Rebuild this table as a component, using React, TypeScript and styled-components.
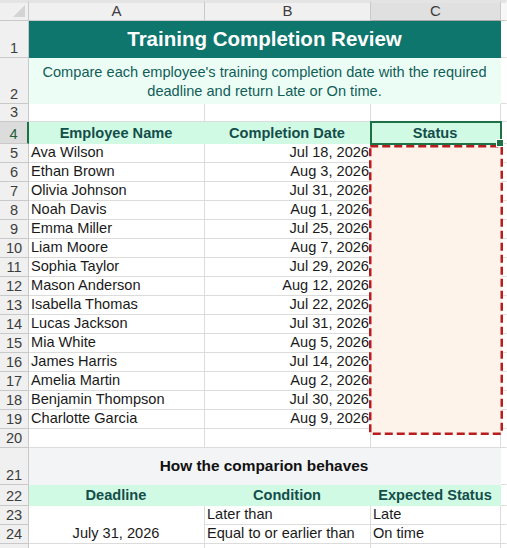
import React from "react";
import styled, { createGlobalStyle, css } from "styled-components";

const Global = createGlobalStyle`
  html, body { margin: 0; padding: 0; background: #ffffff; }
  body { font-family: "Liberation Sans", Arial, sans-serif; }
  #root { width: 507px; height: 548px; overflow: hidden; }
`;

const GRID = "#dcdcdc";
const HDR_LINE = "#c9c9c9";
const SEL_GREEN = "#1e7145";
const TEAL = "#0f766e";
const MINT = "#d1fae5";
const MINT_LIGHT = "#ecfdf5";
const HEAD_TEXT = "#134e4a";

const Sheet = styled.div`
  display: grid;
  grid-template-columns: 29px 176px 166px 130px 6px;
  grid-template-rows: 21px 37px 46px 18px 22px repeat(15, 19px) 19px 37px 21px 19px 19px 19px;
  width: 507px;
  font-size: 14.6px;
  color: #1a1a1a;
`;

type CellProps = {
  $span?: number;
  $rows?: number;
  $align?: "left" | "center" | "right";
  $valign?: "top" | "center" | "bottom";
  $bg?: string;
  $bold?: boolean;
  $color?: string;
  $noRight?: boolean;
  $noBottom?: boolean;
};

const Cell = styled.div<CellProps>`
  box-sizing: border-box;
  display: flex;
  min-width: 0;
  white-space: nowrap;
  overflow: visible;
  border-right: 1px solid ${GRID};
  border-bottom: 1px solid ${GRID};
  padding: 0 3px 2px 2px;
  background: ${(p) => p.$bg || "transparent"};
  color: ${(p) => p.$color || "#1a1a1a"};
  font-weight: ${(p) => (p.$bold ? 700 : 400)};
  justify-content: ${(p) =>
    p.$align === "center" ? "center" : p.$align === "right" ? "flex-end" : "flex-start"};
  align-items: ${(p) =>
    p.$valign === "top" ? "flex-start" : p.$valign === "center" ? "center" : "flex-end"};
  ${(p) => p.$span && css`grid-column: span ${p.$span};`}
  ${(p) => p.$rows && css`grid-row: span ${p.$rows};`}
  ${(p) => p.$noRight && css`border-right-color: transparent;`}
  ${(p) => p.$noBottom && css`border-bottom-color: transparent;`}
`;

const DateCell = styled(Cell)`
  padding-right: 1px;
  position: relative;
  z-index: 1;
`;

const RowNum = styled.div<{ $selected?: boolean }>`
  box-sizing: border-box;
  display: flex;
  justify-content: center;
  align-items: flex-end;
  padding-bottom: 1px;
  background: ${(p) => (p.$selected ? "#dcdcdc" : "#f0f0f0")};
  border-bottom: 1px solid ${HDR_LINE};
  border-right: ${(p) => (p.$selected ? `2px solid ${SEL_GREEN}` : `1px solid ${HDR_LINE}`)};
  color: ${(p) => (p.$selected ? "#1f5f3a" : "#3d3d3d")};
  font-size: 14.6px;
`;

const ColHead = styled.div<{ $selected?: boolean; $edge?: boolean }>`
  box-sizing: border-box;
  display: flex;
  justify-content: center;
  align-items: flex-end;
  padding-bottom: 1px;
  border-top: 3px solid #e4e4e4;
  background: ${(p) => (p.$selected ? "#e0e0e0" : p.$edge ? "#f7f7f7" : "#f0f0f0")};
  border-right: 1px solid ${(p) => (p.$edge ? "transparent" : HDR_LINE)};
  border-bottom: 1px solid ${(p) => (p.$selected ? "#a8a8a8" : HDR_LINE)};
  color: #3d3d3d;
  font-size: 15px;
  line-height: 16px;
`;

const Corner = styled(ColHead)`
  position: relative;
  justify-content: flex-end;
  align-items: flex-end;
  padding: 0 3px 3px 0;
`;

const CornerTri = styled.svg`
  display: block;
`;

const Title = styled(Cell)`
  background: ${TEAL};
  color: #ffffff;
  font-weight: 700;
  font-size: 20.5px;
  justify-content: center;
  align-items: center;
  padding: 0 0 1px 0;
  border-right-color: ${TEAL};
  border-bottom-color: ${TEAL};
`;

const Subtitle = styled(Cell)`
  background: ${MINT_LIGHT};
  color: #115e59;
  white-space: normal;
  text-align: center;
  line-height: 19px;
  justify-content: center;
  align-items: flex-end;
  padding: 0 4px 2px 4px;
  border-right-color: ${MINT_LIGHT};
  border-bottom-color: ${MINT_LIGHT};
`;

const HeadCell = styled(Cell)`
  background: ${MINT};
  color: ${HEAD_TEXT};
  font-weight: 700;
  justify-content: center;
  border-right-color: ${MINT};
  border-bottom-color: ${MINT};
`;

const StatusHead = styled(HeadCell)`
  position: relative;
  z-index: 3;
  border-right-color: ${GRID};
  outline: 2px solid ${SEL_GREEN};
  outline-offset: -1px;
`;

const Handle = styled.span`
  position: absolute;
  right: -4px;
  bottom: -4px;
  width: 6px;
  height: 6px;
  background: ${SEL_GREEN};
  border: 1px solid #ffffff;
`;

const StatusBlock = styled.div`
  grid-column: 4;
  grid-row: span 15;
  position: relative;
  z-index: 2;
  border-right: 1px solid ${GRID};
`;

const Marquee = styled.svg`
  position: absolute;
  left: -2px;
  top: 1px;
  width: 134px;
  height: 290px;
  overflow: visible;
`;

const Section = styled(Cell)`
  background: #f3f4f6;
  color: #111111;
  font-weight: 700;
  font-size: 15.4px;
  justify-content: center;
  align-items: center;
  padding-bottom: 0;
  border-right-color: #f3f4f6;
  border-bottom-color: #f3f4f6;
`;

const names: [string, string][] = [
  ["Ava Wilson", "Jul 18, 2026"],
  ["Ethan Brown", "Aug 3, 2026"],
  ["Olivia Johnson", "Jul 31, 2026"],
  ["Noah Davis", "Aug 1, 2026"],
  ["Emma Miller", "Jul 25, 2026"],
  ["Liam Moore", "Aug 7, 2026"],
  ["Sophia Taylor", "Jul 29, 2026"],
  ["Mason Anderson", "Aug 12, 2026"],
  ["Isabella Thomas", "Jul 22, 2026"],
  ["Lucas Jackson", "Jul 31, 2026"],
  ["Mia White", "Aug 5, 2026"],
  ["James Harris", "Jul 14, 2026"],
  ["Amelia Martin", "Aug 2, 2026"],
  ["Benjamin Thompson", "Jul 30, 2026"],
  ["Charlotte Garcia", "Aug 9, 2026"],
];

const Edge = () => <Cell $noRight />;

export default function App() {
  return (
    <>
      <Global />
      <Sheet>
        {/* column headers */}
        <Corner>
          <CornerTri width="12" height="12" viewBox="0 0 12 12">
            <polygon points="12,0 12,12 0,12" fill="#d4d4d4" />
          </CornerTri>
        </Corner>
        <ColHead>A</ColHead>
        <ColHead>B</ColHead>
        <ColHead $selected>C</ColHead>
        <ColHead $edge />

        {/* row 1 */}
        <RowNum>1</RowNum>
        <Title $span={3}>Training Completion Review</Title>
        <Edge />

        {/* row 2 */}
        <RowNum>2</RowNum>
        <Subtitle $span={3}>
          Compare each employee's training completion date with the required deadline and return Late or On time.
        </Subtitle>
        <Edge />

        {/* row 3 */}
        <RowNum>3</RowNum>
        <Cell />
        <Cell />
        <Cell />
        <Edge />

        {/* row 4 */}
        <RowNum $selected>4</RowNum>
        <HeadCell>Employee Name</HeadCell>
        <HeadCell>Completion Date</HeadCell>
        <StatusHead>
          Status
          <Handle />
        </StatusHead>
        <Edge />

        {/* rows 5-19 */}
        {names.map(([n, d], i) => (
          <React.Fragment key={n}>
            <RowNum>{i + 5}</RowNum>
            <Cell>{n}</Cell>
            <DateCell $align="right">{d}</DateCell>
            {i === 0 && (
              <StatusBlock>
                <Marquee viewBox="0 0 134 290">
                  <rect x="1.25" y="1.25" width="131.5" height="287.5" fill="#fdf3ea" />
                  <rect
                    x="1.25"
                    y="1.25"
                    width="131.5"
                    height="287.5"
                    fill="none"
                    stroke="#b91c1c"
                    strokeWidth="2.5"
                    strokeDasharray="8 4"
                  />
                </Marquee>
              </StatusBlock>
            )}
            <Edge />
          </React.Fragment>
        ))}

        {/* row 20 */}
        <RowNum>20</RowNum>
        <Cell />
        <Cell />
        <Cell />
        <Edge />

        {/* row 21 */}
        <RowNum>21</RowNum>
        <Section $span={3}>How the comparion behaves</Section>
        <Edge />

        {/* row 22 */}
        <RowNum>22</RowNum>
        <HeadCell>Deadline</HeadCell>
        <HeadCell>Condition</HeadCell>
        <HeadCell>Expected Status</HeadCell>
        <Edge />

        {/* rows 23-24 */}
        <RowNum>23</RowNum>
        <Cell $rows={2} $align="center">
          July 31, 2026
        </Cell>
        <Cell>Later than</Cell>
        <Cell>Late</Cell>
        <Edge />

        <RowNum>24</RowNum>
        <Cell>Equal to or earlier than</Cell>
        <Cell>On time</Cell>
        <Edge />

        {/* row 25 */}
        <RowNum>25</RowNum>
        <Cell />
        <Cell />
        <Cell />
        <Edge />
      </Sheet>
    </>
  );
}
